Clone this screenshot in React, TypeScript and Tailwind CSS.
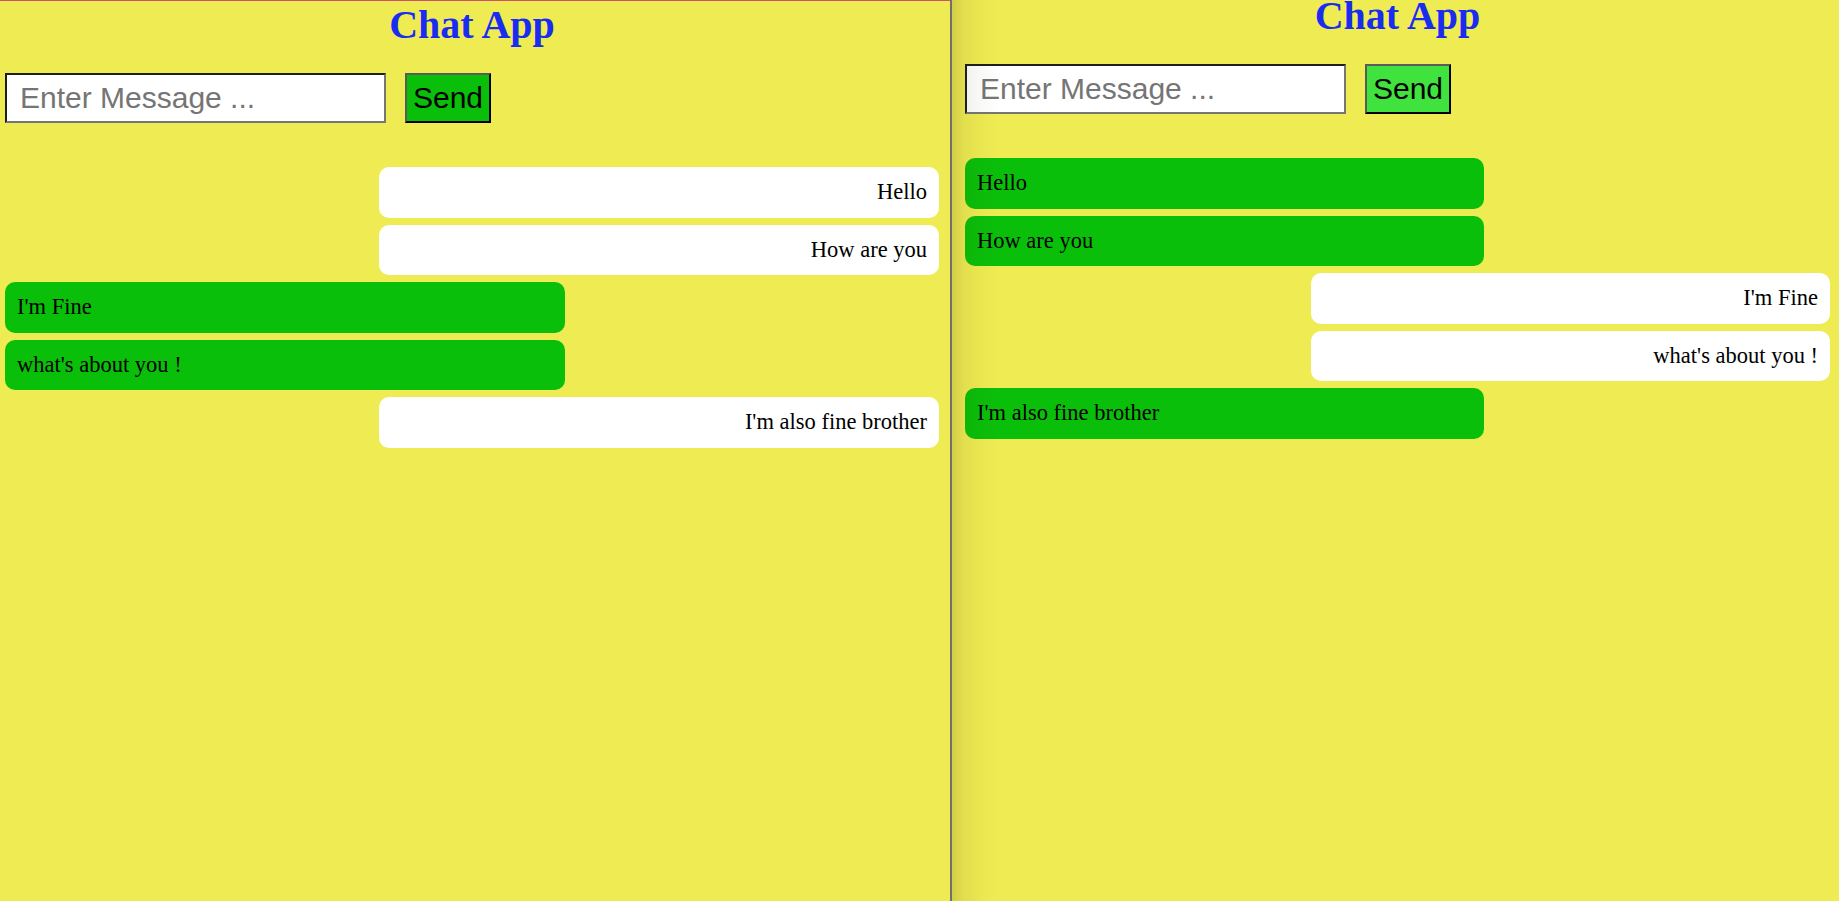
import React from "react";

type Msg = { text: string; mine: boolean };

const messages: string[] = [
  "Hello",
  "How are you",
  "I'm Fine",
  "what's about you !",
  "I'm also fine brother",
];
// left panel: true = white/right bubble
const leftMine = [true, true, false, false, true];

function Panel({ mine, sendBg, right }: { mine: boolean[]; sendBg: string; right?: boolean }) {
  const msgs: Msg[] = messages.map((t, i) => ({ text: t, mine: mine[i] }));
  return (
    <div className="flex flex-col">
      <h1
        className={
          "text-center font-bold text-[40px] leading-[46px] text-[#1a2cf0] " +
          (right ? "mt-[-7px]" : "mt-[1px]")
        }
        style={{ fontFamily: '"Liberation Serif", "Times New Roman", serif' }}
      >
        Chat App
      </h1>
      <div className="mt-[25px] flex items-center">
        <input
          type="text"
          placeholder="Enter Message ..."
          className="h-[50px] w-[381px] bg-white border-2 border-t-[#1e1e1e] border-l-[#1e1e1e] border-b-[#767676] border-r-[#767676] px-[13px] text-[30px] text-black placeholder:text-[#757575] outline-none"
          style={{ fontFamily: '"Liberation Sans", Arial, sans-serif' }}
        />
        <button
          className={
            "ml-[19px] h-[50px] w-[86px] border-2 border-t-[#5a5a5a] border-l-[#5a5a5a] border-b-black border-r-black text-[30px] leading-none text-black flex items-center justify-center " +
            sendBg
          }
          style={{ fontFamily: '"Liberation Sans", Arial, sans-serif' }}
        >
          Send
        </button>
      </div>
      <div className="mt-[44px] flex flex-col gap-[7px]">
        {msgs.map((m, i) => (
          <div key={i} className={"flex " + (m.mine ? "justify-end" : "justify-start")}>
            <div
              className={
                "w-[60%] rounded-[10px] px-3 py-[12.25px] text-[22.5px] leading-[26px] text-black " +
                (m.mine ? "bg-white text-right" : "bg-[#0abf0a] text-left")
              }
              style={{ fontFamily: '"Liberation Serif", "Times New Roman", serif' }}
            >
              {m.text}
            </div>
          </div>
        ))}
      </div>
    </div>
  );
}

export default function App() {
  return (
    <div className="flex h-[901px] w-full overflow-hidden bg-[#efec53]">
      <div className="w-[950px] shrink-0 border-t border-[#d0506f] pl-[5px] pr-[11px]">
        <Panel mine={leftMine} sendBg="bg-[#0abf0a]" />
      </div>
      <div className="w-[2px] shrink-0 bg-[#707070]" />
      <div className="relative flex-1 pl-[13px] pr-[9px] overflow-hidden">
        <Panel mine={leftMine.map((v) => !v)} sendBg="bg-[#40e33d]" right />
        <div
          className="pointer-events-none absolute inset-y-0 left-0 w-[50px]"
          style={{
            background:
              "linear-gradient(to right, rgba(60,50,0,0.16) 0px, rgba(60,50,0,0.07) 12px, rgba(60,50,0,0.03) 28px, rgba(60,50,0,0) 48px)",
          }}
        />
      </div>
    </div>
  );
}
